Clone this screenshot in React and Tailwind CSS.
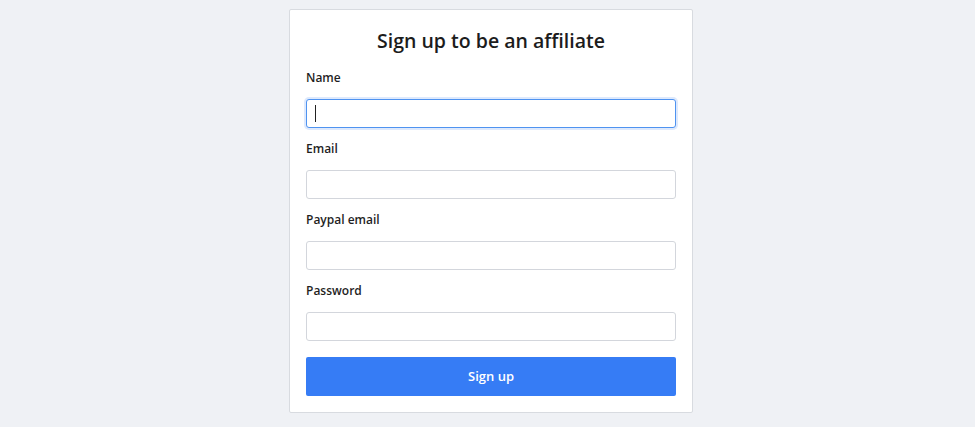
import React from "react";

function Field({ label, focused, first }) {
  return (
    <div className={first ? "mt-[15px]" : "mt-[13px]"}>
      <div className="text-[12px] leading-4 font-semibold text-[#1f1f1f]">{label}</div>
      <div className="relative mt-[13px]">
        <div
          className={
            focused
              ? "h-[29px] w-full rounded-[3px] border border-[#4f93f0] bg-white shadow-[0_0_0_2px_rgba(66,133,244,0.18)]"
              : "h-[29px] w-full rounded-[3px] border border-[#d3d6dc] bg-white"
          }
        />
        {focused && (
          <div className="absolute left-[9px] top-[6px] h-[17px] w-[1px] bg-[#222]" />
        )}
      </div>
    </div>
  );
}

export default function App() {
  return (
    <div
      className="min-h-[427px] w-full bg-[#eff1f5] pt-[9px] pl-[7px]"
      style={{ fontFamily: '"Open Sans", "Noto Sans", sans-serif' }}
    >
      <div className="mx-auto w-[404px] rounded-[2px] border border-[#d8dbe0] bg-white px-4 pt-[17px] pb-4">
        <h1 className="text-center text-[19.5px] leading-[28px] font-semibold text-[#1c1c1c]">
          Sign up to be an affiliate
        </h1>
        <Field label="Name" focused first />
        <Field label="Email" />
        <Field label="Paypal email" />
        <Field label="Password" />
        <button className="mt-[16px] flex h-[39px] w-full items-center justify-center rounded-[2px] bg-[#367cf5] text-[13px] font-semibold text-white">
          Sign up
        </button>
      </div>
    </div>
  );
}
